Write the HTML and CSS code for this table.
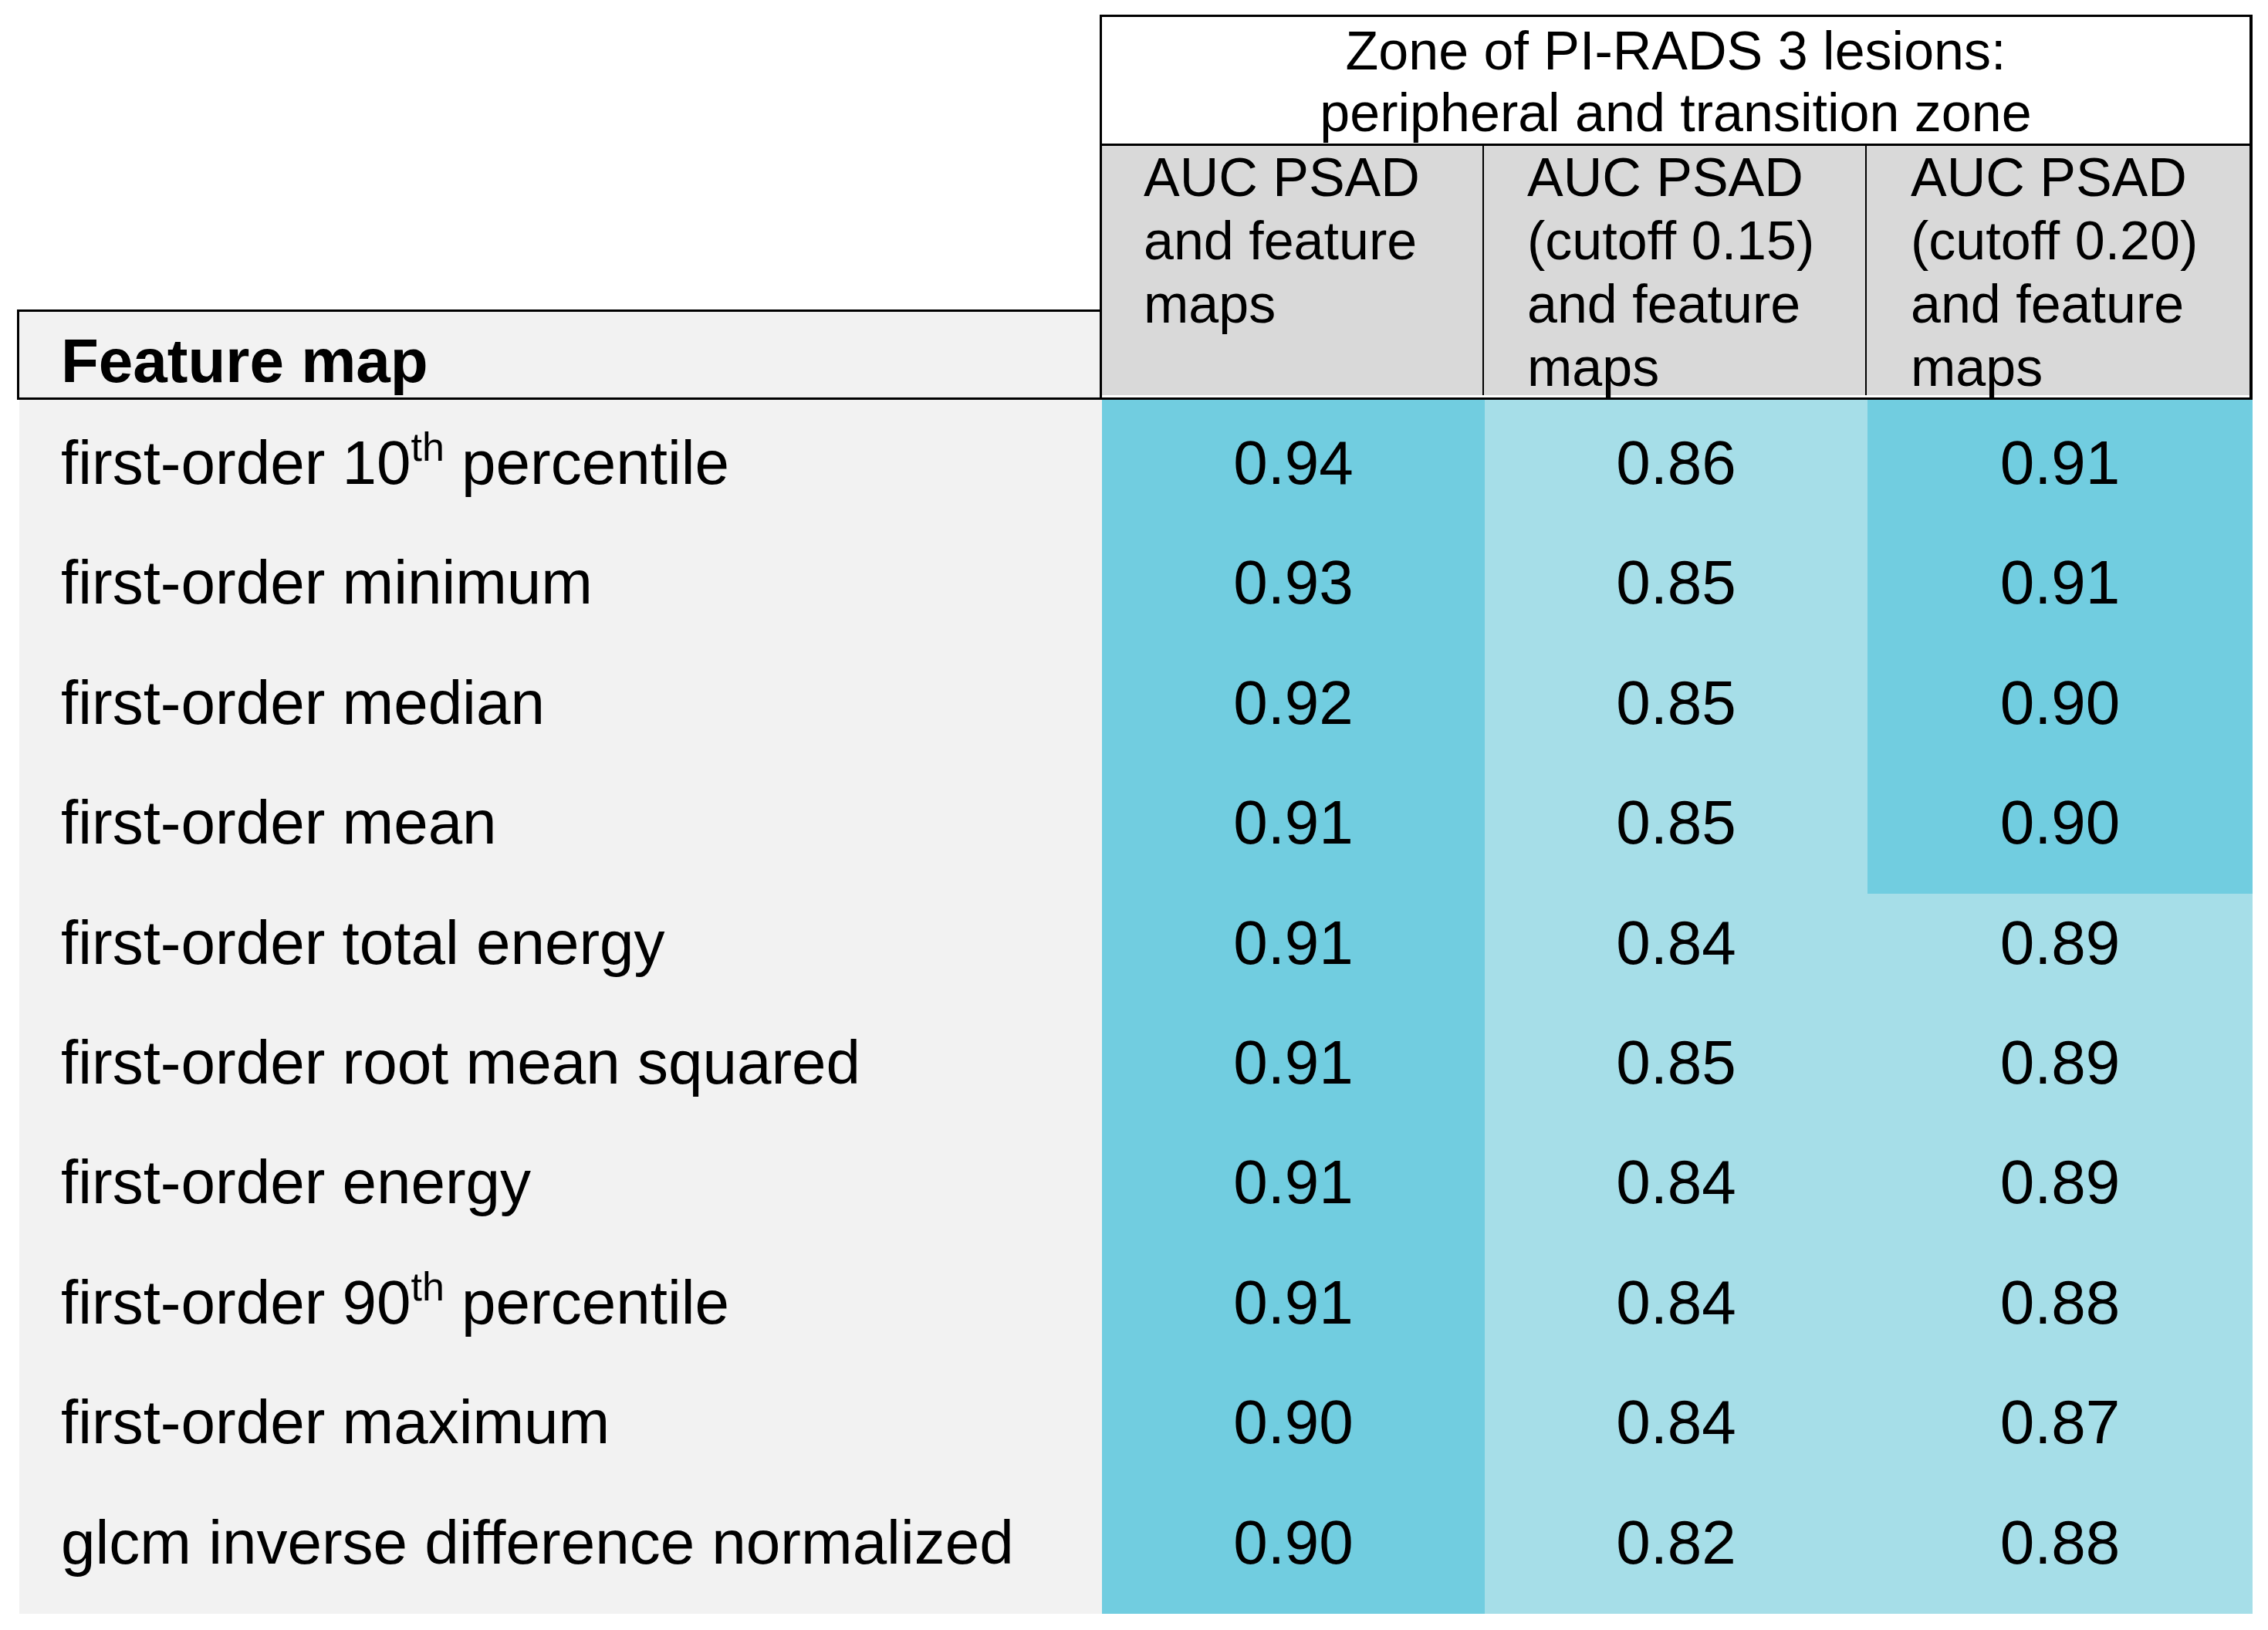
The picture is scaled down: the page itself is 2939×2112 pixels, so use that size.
FILE: index.html
```html
<!DOCTYPE html>
<html lang="en">
<head>
<meta charset="utf-8">
<title>Zone of PI-RADS 3 lesions</title>
<link rel="stylesheet" href="styles.css">
</head>
<body>
<div class="table">
  <div class="head">
    <div class="fm-head">Feature map</div>
    <div class="right-head">
      <div class="zone">
        <div>Zone of PI-RADS 3 lesions:</div>
        <div>peripheral and transition zone</div>
      </div>
      <div class="cols">
        <div class="ch ch1">AUC PSAD<br>and feature<br>maps</div>
        <div class="ch ch2">AUC PSAD<br>(cutoff 0.15)<br>and feature<br>maps</div>
        <div class="ch ch3">AUC PSAD<br>(cutoff 0.20)<br>and feature<br>maps</div>
      </div>
    </div>
  </div>
  <div class="body">
    <div class="lab"><span>first-order 10<sup class="ord">th</sup> percentile</span></div>
    <div class="num dark">0.94</div><div class="num">0.86</div><div class="num dark">0.91</div>

    <div class="lab"><span>first-order minimum</span></div>
    <div class="num dark">0.93</div><div class="num">0.85</div><div class="num dark">0.91</div>

    <div class="lab"><span>first-order median</span></div>
    <div class="num dark">0.92</div><div class="num">0.85</div><div class="num dark">0.90</div>

    <div class="lab"><span>first-order mean</span></div>
    <div class="num dark">0.91</div><div class="num">0.85</div><div class="num dark last-dark">0.90</div>

    <div class="lab"><span>first-order total energy</span></div>
    <div class="num dark">0.91</div><div class="num">0.84</div><div class="num">0.89</div>

    <div class="lab"><span>first-order root mean squared</span></div>
    <div class="num dark">0.91</div><div class="num">0.85</div><div class="num">0.89</div>

    <div class="lab"><span>first-order energy</span></div>
    <div class="num dark">0.91</div><div class="num">0.84</div><div class="num">0.89</div>

    <div class="lab"><span>first-order 90<sup class="ord">th</sup> percentile</span></div>
    <div class="num dark">0.91</div><div class="num">0.84</div><div class="num">0.88</div>

    <div class="lab"><span>first-order maximum</span></div>
    <div class="num dark">0.90</div><div class="num">0.84</div><div class="num">0.87</div>

    <div class="lab"><span>glcm inverse difference normalized</span></div>
    <div class="num dark">0.90</div><div class="num">0.82</div><div class="num">0.88</div>
  </div>
</div>
</body>
</html>
```
FILE: styles.css
```css
html, body {
  margin: 0;
  padding: 0;
  background: #ffffff;
}

body {
  width: 2939px;
  height: 2112px;
  font-family: "Liberation Sans", Arial, sans-serif;
  color: #000000;
}

.table {
  padding: 19px 0 0 22px;
  width: 2897px;
}

.head {
  display: flex;
  align-items: flex-end;
  height: 499px;
}

.fm-head {
  width: 1403px;
  height: 117px;
  box-sizing: border-box;
  border: 3px solid #000000;
  border-right: none;
  background: #f2f2f2;
  display: flex;
  align-items: flex-end;
  padding: 0 0 7px 54px;
  font-weight: bold;
  font-size: 80px;
  line-height: 80px;
}

.right-head {
  width: 1494px;
  height: 499px;
  display: flex;
  flex-direction: column;
}

.zone {
  height: 170px;
  flex: 0 0 170px;
  box-sizing: border-box;
  border: 3px solid #000000;
  border-right-width: 4px;
  background: #ffffff;
  display: flex;
  flex-direction: column;
  justify-content: center;
  align-items: center;
  padding-top: 4px;
  font-size: 70px;
  line-height: 80px;
}

.cols {
  flex: 1 1 0;
  min-height: 0;
  display: flex;
  box-sizing: border-box;
  border: 3px solid #000000;
  border-top: none;
  border-right-width: 4px;
  background: #ffffff;
  padding-bottom: 3px;
}

.ch {
  background: #d9d9d9;
  font-size: 70px;
  line-height: 82px;
  box-sizing: border-box;
  height: 323px;
  overflow: visible;
}

.ch1 {
  width: 495px;
  border-right: 2px solid #000000;
  padding-left: 54px;
}

.ch2 {
  width: 496px;
  border-right: 2px solid #000000;
  padding-left: 56px;
}

.ch3 {
  width: 496px;
  padding-left: 57px;
}

.body {
  margin-left: 3px;
  display: grid;
  grid-template-columns: 1403px 496px 496px 499px;
  grid-template-rows: repeat(9, 155.4px) 174.4px;
  background: #a6dee8;
  font-size: 80px;
}

.lab {
  background: #f2f2f2;
  padding: 36px 0 0 54px;
  white-space: nowrap;
  line-height: 92px;
}

.num {
  text-align: center;
  padding-top: 36px;
  line-height: 92px;
}

.dark {
  background: #71cde0;
}

.last-dark {
  box-shadow: 0 18px 0 #71cde0;
}

.ord {
  font-size: 52px;
  line-height: 0;
  vertical-align: 30px;
}
```
